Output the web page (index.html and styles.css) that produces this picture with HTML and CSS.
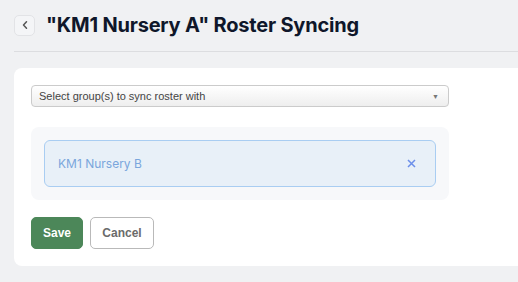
FILE: index.html
```html
<html>
	<head>
		<meta charset="utf8"/>
		<title>Roster Syncing</title>
		<link rel="stylesheet" href="styles.css">
	</head>
	<body>
		<div class="header">
			<span class="back">
				<svg width="8" height="10" viewBox="0 0 8 10"><path d="M5.5 1.8 L2.5 5 L5.5 8.2" fill="none" stroke="#555" stroke-width="1.5" stroke-linecap="round" stroke-linejoin="round"/></svg>
			</span>
			<h1 class="title">"KM1 Nursery A" Roster Syncing</h1>
		</div>

		<div class="card">
			<div class="inner">
				<div class="select">
					<span>Select group(s) to sync roster with</span>
					<span class="arrow">&#9660;</span>
				</div>

				<div class="groups">
					<div class="chip">
						<span>KM1 Nursery B</span>
						<svg width="9" height="9" viewBox="0 0 9 9"><path d="M1 1 L8 8 M8 1 L1 8" stroke="#6c8fea" stroke-width="1.5"/></svg>
					</div>
				</div>

				<div class="buttons">
					<button class="btn save">Save</button>
					<button class="btn cancel">Cancel</button>
				</div>
			</div>
		</div>
	</body>
</html>
```
FILE: styles.css
```css
* {
	box-sizing : border-box;
}

html, body {
	height : 100%;
}

body {
	margin      : 0;
	background  : #f0f1f3;
	font-family : Inter, sans-serif;
	overflow    : hidden;
}

.header {
	display       : flex;
	align-items   : center;
	gap           : 11px;
	height        : 52px;
	margin-left   : 14px;
	padding-bottom: 1px;
	border-bottom : 1px solid #dcdde0;
}

.back {
	display         : flex;
	align-items     : center;
	justify-content : center;
	width           : 21px;
	height          : 21px;
	border          : 1px solid #e2e3e6;
	border-radius   : 5px;
	background      : #f4f5f7;
}

.title {
	margin         : 0;
	font-size      : 20px;
	font-weight    : 700;
	letter-spacing : -0.2px;
	color          : #0f172a;
}

.card {
	margin        : 16px -20px 0 14px;
	padding       : 17px;
	background    : #fff;
	border-radius : 8px;
}

.inner {
	width : 418px;
}

.select {
	display         : flex;
	align-items     : center;
	justify-content : space-between;
	height          : 22px;
	padding         : 0 9px 0 7px;
	border          : 1px solid #cbcbcb;
	border-radius   : 4px;
	background      : linear-gradient(#ffffff, #eeeeee);
	font-family     : 'Liberation Sans', Arial, sans-serif;
	font-size       : 11px;
	color           : #444;
}

.arrow {
	font-size : 7px;
	color     : #777;
}

.groups {
	margin-top    : 20px;
	padding       : 13px;
	background    : #f7f8fa;
	border-radius : 8px;
}

.chip {
	display         : flex;
	align-items     : center;
	justify-content : space-between;
	height          : 47px;
	padding         : 0 19px 0 13px;
	background      : #e8f0f8;
	border          : 1px solid #a9cdf2;
	border-radius   : 6px;
	font-size       : 12px;
	color           : #7aa6dc;
}

.buttons {
	display    : flex;
	gap        : 7px;
	margin-top : 17px;
}

.btn {
	height        : 32px;
	padding       : 0;
	border-radius : 5px;
	font-family   : 'Liberation Sans', Arial, sans-serif;
	font-size     : 12px;
	font-weight   : 700;
}

.save {
	width      : 52px;
	background : #4c8759;
	border     : 1px solid #4c8759;
	color      : #fff;
}

.cancel {
	width      : 64px;
	background : #fff;
	border     : 1px solid #b9b9b9;
	color      : #6b6b6b;
}
```
